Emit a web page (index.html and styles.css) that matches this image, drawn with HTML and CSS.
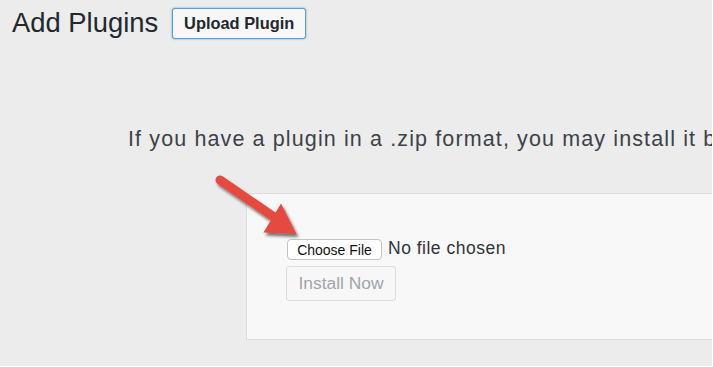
FILE: index.html
```html
<!DOCTYPE html>
<html lang="en">
<head>
<meta charset="utf-8">
<title>Add Plugins</title>
<link rel="stylesheet" href="styles.css">
</head>
<body>
<div class="page">
  <header class="head">
    <h1 class="title">Add Plugins</h1>
    <button class="upload-btn" type="button">Upload Plugin</button>
  </header>
  <p class="intro">If you have a plugin in a .zip format, you may install it by uploading it here.</p>
  <div class="upload-box">
    <div class="file-row">
      <button class="choose-btn" type="button">Choose File</button>
      <span class="file-status">No file chosen</span>
    </div>
    <button class="install-btn" type="button" disabled>Install Now</button>
  </div>
  <svg class="arrow" width="110" height="90" viewBox="200 160 110 90" aria-hidden="true">
    <defs>
      <filter id="shadow" x="-30%" y="-30%" width="160%" height="160%">
        <feDropShadow dx="2" dy="3" stdDeviation="1.6" flood-color="#000" flood-opacity="0.55"/>
      </filter>
    </defs>
    <g filter="url(#shadow)">
      <line x1="220" y1="180" x2="274" y2="217" stroke="#e5483f" stroke-width="9" stroke-linecap="round"/>
      <polygon points="281,203.5 263.5,232.5 296.5,234" fill="#e5483f"/>
    </g>
  </svg>
</div>
</body>
</html>
```

FILE: styles.css
```css
html {
  background: #ffffff;
}
body {
  margin: 0;
}
.page {
  position: relative;
  width: 712px;
  height: 366px;
  background: #ececec;
  overflow: hidden;
  font-family: "Liberation Sans", Arial, sans-serif;
}
.head {
  display: flex;
  align-items: flex-start;
  gap: 14px;
  padding: 7px 0 0 12px;
}
.title {
  margin: 0;
  font-size: 27.4px;
  font-weight: 400;
  line-height: 32px;
  color: #23282d;
}
.upload-btn {
  margin-top: 1px;
  box-sizing: border-box;
  width: 134px;
  height: 31px;
  padding: 0;
  background: #f7f7f7;
  border: 1px solid #5b9dd9;
  border-radius: 3px;
  box-shadow: 0 0 2px rgba(30, 140, 190, 0.8);
  font-family: "Liberation Sans", Arial, sans-serif;
  font-size: 16.4px;
  font-weight: 700;
  color: #23282d;
}
.intro {
  margin: 87px 0 0 0;
  padding-left: 128px;
  font-size: 21.5px;
  line-height: 26px;
  letter-spacing: 1.12px;
  color: #3c4247;
  white-space: nowrap;
}
.upload-box {
  box-sizing: border-box;
  margin: 41px 0 0 246px;
  height: 147px;
  padding: 45px 0 0 40px;
  background: #f8f8f8;
  border: 1px solid #dcdcdc;
  border-right: none;
}
.file-row {
  display: flex;
  align-items: flex-start;
  gap: 6px;
}
.choose-btn {
  box-sizing: border-box;
  width: 95px;
  height: 21px;
  padding: 0;
  background: #ffffff;
  border: 1px solid #c3c3c3;
  border-radius: 4px;
  font-family: "Liberation Sans", Arial, sans-serif;
  font-size: 14px;
  color: #111;
}
.file-status {
  font-size: 17.5px;
  line-height: 18px;
  letter-spacing: 0.5px;
  color: #2f3438;
}
.install-btn {
  display: block;
  box-sizing: border-box;
  margin: 6px 0 0 -1px;
  width: 110px;
  height: 35px;
  padding: 0;
  background: #f7f7f7;
  border: 1px solid #dddddd;
  border-radius: 3px;
  font-family: "Liberation Sans", Arial, sans-serif;
  font-size: 17.4px;
  color: #a0a5aa;
}
.arrow {
  position: absolute;
  left: 200px;
  top: 160px;
}
```
